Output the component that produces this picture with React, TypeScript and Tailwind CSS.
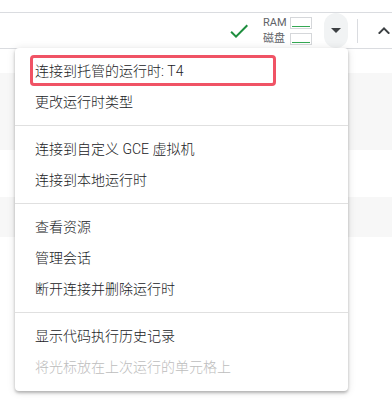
import React from "react";

const font = { fontFamily: 'Roboto, "Noto Sans CJK SC", sans-serif' };

function Bar() {
  return (
    <div className="relative w-[22px] h-[12px] border border-[#d5d7da]">
      <div className="absolute left-[1px] right-[1px] bottom-[1px] h-px bg-[#34a853]" />
    </div>
  );
}

const items: (string | null)[] = [
  "连接到托管的运行时: T4",
  "更改运行时类型",
  null,
  "连接到自定义 GCE 虚拟机",
  "连接到本地运行时",
  null,
  "查看资源",
  "管理会话",
  "断开连接并删除运行时",
  null,
  "显示代码执行历史记录",
  "DISABLED",
];

export default function App() {
  return (
    <div className="relative w-[392px] h-[413px] bg-white overflow-hidden" style={font}>
      <div className="h-[12px]" />
      <div className="h-[37px] border-y border-[#dadce0] flex items-center">
        <div className="ml-[227px] w-[24px] h-[24px] flex items-center justify-center">
          <svg width="24" height="24" viewBox="0 0 24 24">
            <path d="M9 16.17L4.83 12l-1.42 1.41L9 19 21 7l-1.41-1.41z" fill="#1e8e3e" />
          </svg>
        </div>
        <div className="ml-[12px] flex flex-col gap-[4px] text-[11px] leading-[12px] text-[#5f6368]">
          <div className="flex items-center gap-[4px]">
            <span className="w-[23px]">RAM</span>
            <Bar />
          </div>
          <div className="flex items-center gap-[4px]">
            <span className="w-[23px]">磁盘</span>
            <Bar />
          </div>
        </div>
        <div className="ml-[12px] w-[24px] h-[35px] rounded-full bg-[#f1f3f4] flex items-center justify-center">
          <svg width="10" height="5" viewBox="7 10 10 5">
            <path d="M7 10l5 5 5-5z" fill="#3c4043" />
          </svg>
        </div>
        <div className="ml-[9px] w-px h-[24px] bg-[#dadce0]" />
        <div className="ml-[20px] flex items-center">
          <svg width="12" height="7.4" viewBox="6 8 12 7.41">
            <path d="M7.41 15.41L12 10.83l4.59 4.58L18 14l-6-6-6 6z" fill="#3c4043" />
          </svg>
        </div>
      </div>
      <div className="h-[24px]" />
      <div className="h-[77px] bg-[#f7f7f7]" />
      <div className="h-[47px]" />
      <div className="h-[40px] bg-[#f7f7f7]" />

      <div className="absolute left-[15px] top-[48px] w-[333px] bg-white rounded-[4px] py-[8px] shadow-[0_2px_3px_rgba(0,0,0,0.25),0_1px_8px_rgba(0,0,0,0.12)]">
        {items.map((it, i) =>
          it === null ? (
            <div key={i} className="py-[7px] pb-[8px]">
              <div className="h-px bg-[#e0e0e0]" />
            </div>
          ) : (
            <div
              key={i}
              className={
                "h-[31px] flex items-center pl-[20px] text-[14px] font-light " +
                (it === "DISABLED" ? "text-[#bdbdbd]" : "text-[#202124]")
              }
            >
              {it === "DISABLED" ? "将光标放在上次运行的单元格上" : it}
            </div>
          )
        )}
        <div className="absolute left-[15px] top-[7px] w-[246px] h-[31px] border-[3px] border-[#f05365] rounded-[4px]" />
      </div>
    </div>
  );
}
